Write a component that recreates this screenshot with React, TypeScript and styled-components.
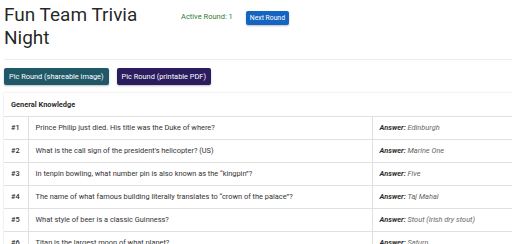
import React from "react";
import styled, { createGlobalStyle } from "styled-components";

const Global = createGlobalStyle`
  html, body { margin: 0; padding: 0; background: #fff; overflow: hidden; }
  body { font-family: Roboto, "Liberation Sans", sans-serif; color: rgba(0,0,0,0.87); }
`;

const Page = styled.div`
  padding: 0 4px;
  width: 600px;
`;

const Header = styled.header`
  display: flex;
  align-items: flex-start;
  height: 59px;
  border-bottom: 1px solid #ececec;
  margin-right: -100px;
`;

const Title = styled.h1`
  margin: 3px 0 0;
  width: 177px;
  font-size: 19px;
  font-weight: 400;
  line-height: 23px;
`;

const Active = styled.span`
  margin-top: 12px;
  font-size: 7.5px;
  color: #2e7d32;
  line-height: 10px;
`;

const Button = styled.button<{ $bg: string }>`
  font-family: Roboto, "Liberation Sans", sans-serif;
  font-size: 7.4px;
  font-weight: 400;
  color: #fff;
  background: ${(p) => p.$bg};
  border: none;
  border-radius: 2px;
  padding: 0 5px;
  height: 17px;
  cursor: pointer;
  box-shadow: 0 1px 2px rgba(0,0,0,0.25);
`;

const NextButton = styled(Button)`
  margin: 11px 0 0 13px;
  height: 14px;
  font-size: 6.8px;
  padding: 0 4px;
`;

const Actions = styled.div`
  display: flex;
  gap: 8px;
  margin-top: 8px;
`;

const Table = styled.table`
  margin-top: 8px;
  border-collapse: collapse;
  width: 560px;
  font-size: 7.4px;
  line-height: 10px;
  color: #333;
  box-shadow: 0 0 2px rgba(0,0,0,0.15);
`;

const HeadCell = styled.th`
  text-align: left;
  font-weight: 700;
  color: rgba(0,0,0,0.87);
  padding: 0 7px;
  height: 23px;
  border-bottom: 1px solid #e0e0e0;
`;

const Row = styled.tr`
  height: 23px;
  border-bottom: 1px solid #e0e0e0;
`;

const Cell = styled.td<{ $w?: number }>`
  padding: 0 7px;
  width: ${(p) => (p.$w ? `${p.$w}px` : "auto")};
  border-right: 1px solid #e0e0e0;
  box-sizing: border-box;
`;

const Num = styled(Cell)`
  font-weight: 500;
  color: rgba(0,0,0,0.87);
`;

const AnswerLabel = styled.b`
  font-style: italic;
  color: rgba(0,0,0,0.87);
`;

const AnswerText = styled.i`
  color: #666;
`;

const questions = [
  ["Prince Philip just died. His title was the Duke of where?", "Edinburgh"],
  ["What is the call sign of the president's helicopter? (US)", "Marine One"],
  ["In tenpin bowling, what number pin is also known as the \u201ckingpin\u201d?", "Five"],
  ["The name of what famous building literally translates to \u201ccrown of the palace\u201d?", "Taj Mahal"],
  ["What style of beer is a classic Guinness?", "Stout (Irish dry stout)"],
  ["Titan is the largest moon of what planet?", "Saturn"],
];

export default function App() {
  return (
    <Page>
      <Global />
      <Header>
        <Title>Fun Team Trivia Night</Title>
        <Active>Active Round: 1</Active>
        <NextButton $bg="#1565c0">Next Round</NextButton>
      </Header>
      <Actions>
        <Button $bg="#205868">Pic Round (shareable image)</Button>
        <Button $bg="#2a1c5e">Pic Round (printable PDF)</Button>
      </Actions>
      <Table>
        <thead>
          <tr>
            <HeadCell colSpan={3}>General Knowledge</HeadCell>
          </tr>
        </thead>
        <tbody>
          {questions.map(([q, a], i) => (
            <Row key={i}>
              <Num $w={24}>#{i + 1}</Num>
              <Cell $w={344}>{q}</Cell>
              <Cell>
                <AnswerLabel>Answer:</AnswerLabel> <AnswerText>{a}</AnswerText>
              </Cell>
            </Row>
          ))}
        </tbody>
      </Table>
    </Page>
  );
}
